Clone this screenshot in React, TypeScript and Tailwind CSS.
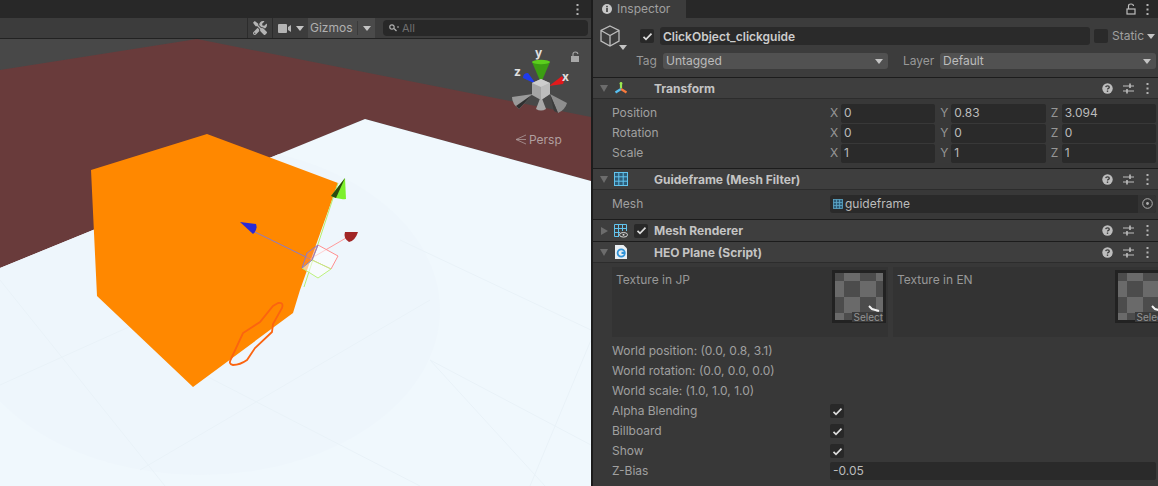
import type { ReactNode } from "react";
import { FaTools } from "react-icons/fa";

const CheckIcon = () => (
  <svg width="11" height="9" viewBox="0 0 11 9" fill="none">
    <path d="M1.5 4.8 L4 7.3 L9.5 1.6" stroke="#dcdcdc" strokeWidth="1.7" />
  </svg>
);

const Checkbox = () => (
  <div className="flex h-[14px] w-[14px] items-center justify-center rounded-[2px] bg-[#282828]">
    <CheckIcon />
  </div>
);

const Caret = ({ color = "#c4c4c4" }: { color?: string }) => (
  <svg width="8" height="5" viewBox="0 0 8 5">
    <path d="M0 0 H8 L4 5 Z" fill={color} />
  </svg>
);

const Dots = () => (
  <svg width="3" height="11" viewBox="0 0 3 11" fill="#b4b4b4">
    <rect x="0.5" y="0" width="2" height="2" />
    <rect x="0.5" y="4.5" width="2" height="2" />
    <rect x="0.5" y="9" width="2" height="2" />
  </svg>
);

const HelpIcon = () => (
  <svg width="11" height="11" viewBox="0 0 11 11">
    <circle cx="5.5" cy="5.5" r="5.2" fill="#bdbdbd" />
    <path d="M3.7 4.2 C3.9 2.5 7.3 2.5 7.3 4.3 C7.3 5.5 5.5 5.3 5.5 6.6" stroke="#3c3c3c" strokeWidth="1.3" fill="none" />
    <rect x="4.8" y="7.5" width="1.4" height="1.4" fill="#3c3c3c" />
  </svg>
);

const SlidersIcon = () => (
  <svg width="11" height="11" viewBox="0 0 11 11" stroke="#bdbdbd" strokeWidth="1.1" fill="none">
    <path d="M0 3 H11 M0 8 H11" />
    <path d="M7 0.5 V5 M4 6 V10.5" strokeWidth="1.6" />
  </svg>
);

const MeshIcon = () => (
  <svg width="14" height="14" viewBox="0 0 14 14" fill="#2d5c78" stroke="#62c4ee" strokeWidth="1">
    <rect x="0.5" y="0.5" width="13" height="13" />
    <path d="M4.8 0.5 V13.5 M9.2 0.5 V13.5 M0.5 4.8 H13.5 M0.5 9.2 H13.5" />
  </svg>
);

const MeshRendererIcon = () => (
  <svg width="14" height="14" viewBox="0 0 14 14" fill="none" stroke="#62c4ee" strokeWidth="1">
    <path d="M5 12.5 H0.5 V0.5 H12.5 V7 M4.5 0.5 V12 M8.5 0.5 V7 M0.5 4.5 H12.5 M0.5 8.5 H6" />
    <ellipse cx="9.5" cy="10.8" rx="4" ry="2.3" stroke="#d8d8d8" fill="#3c3c3c" />
    <circle cx="9.5" cy="10.8" r="1" fill="#d8d8d8" stroke="none" />
  </svg>
);

const ScriptIcon = () => (
  <svg width="12" height="14" viewBox="0 0 12 14">
    <path d="M0 0 H8.5 L12 3.5 V14 H0 Z" fill="#e8edf1" />
    <circle cx="6.2" cy="8" r="3.6" fill="none" stroke="#2f93d8" strokeWidth="1.8" />
    <rect x="6.5" y="6.8" width="3.5" height="2.2" fill="#2f93d8" />
  </svg>
);

const TransformIcon = () => (
  <svg width="14" height="13" viewBox="0 0 14 13" fill="none" strokeWidth="2.2">
    <path d="M7 6.5 V1" stroke="#9be851" />
    <path d="M7 7 L1.5 10.5" stroke="#58c0f2" />
    <path d="M7 7 L12.5 10.5" stroke="#f97a3c" />
    <circle cx="7" cy="1.5" r="1.4" fill="#9be851" stroke="none" />
  </svg>
);

const SectionHeader = ({
  title,
  icon,
  open = true,
  check = false,
  tall = false,
}: {
  title: string;
  icon: ReactNode;
  open?: boolean;
  check?: boolean;
  tall?: boolean;
}) => (
  <div className={`flex items-center border-t border-[#1c1c1c] bg-[#3e3e3e] ${tall ? "h-[22px]" : "h-[21px]"}`}>
    <div className="flex w-[15px] justify-end">
      {open ? (
        <svg width="8" height="7" viewBox="0 0 8 7">
          <path d="M0 0 H8 L4 7 Z" fill="#6c6c6c" />
        </svg>
      ) : (
        <svg width="7" height="8" viewBox="0 0 7 8">
          <path d="M0 0 V8 L7 4 Z" fill="#6c6c6c" />
        </svg>
      )}
    </div>
    <div className="flex w-[26px] justify-center">{icon}</div>
    <div className="flex w-[20px] justify-start">{check && <Checkbox />}</div>
    <span className={`flex-1 text-[12px] font-bold text-[#c4c4c4] ${tall ? "" : "pt-[2px]"}`}>{title}</span>
    <div className="flex items-center gap-[10px] pr-[9px]">
      <HelpIcon />
      <SlidersIcon />
      <div className="ml-[2px]">
        <Dots />
      </div>
    </div>
  </div>
);

const AxisField = ({ axis, value }: { axis: string; value: string }) => (
  <div className="flex items-center">
    <span className="w-[11px] shrink-0 text-[12px] text-[#969696]">{axis}</span>
    <div className="flex h-[19px] flex-1 items-center rounded-[2px] bg-[#2a2a2a] pl-[3px] text-[12px] text-[#bcbcbc]">
      {value}
    </div>
  </div>
);

const VectorRow = ({ label, x, y, z }: { label: string; x: string; y: string; z: string }) => (
  <div className="flex h-[20px] items-center pl-[19px] pr-[2px]">
    <span className="w-[218px] shrink-0 text-[12px] text-[#a0a0a0]">{label}</span>
    <div className="grid flex-1 grid-cols-3 gap-[5px]">
      <AxisField axis="X" value={x} />
      <AxisField axis="Y" value={y} />
      <AxisField axis="Z" value={z} />
    </div>
  </div>
);

const checker = [
  [0, 1, 0, 1],
  [1, 0, 1, 0],
  [0, 1, 0, 1],
  [1, 0, 1, 0],
];

const Thumb = () => (
  <div className="relative h-[53px] w-[54px] shrink-0 bg-[#222222] p-[3px]">
    <svg width="48" height="47" viewBox="0 0 48 47" className="block">
      <rect width="48" height="47" fill="#4c4c4c" />
      {checker.map((row, r) =>
        row.map((on, c) =>
          on ? <rect key={`${r}-${c}`} x={c * 16 - 7} y={r * 16 - 8} width="16" height="16" fill="#6a6a6a" /> : null,
        ),
      )}
      <path d="M34 33 L37 36 L44 38" stroke="#f2f2f2" strokeWidth="2" fill="none" />
    </svg>
    <span className="absolute bottom-[1px] right-[3px] bg-[#3a3a3a] pl-[2px] text-[10px] leading-[10px] text-[#949494]">
      Select
    </span>
  </div>
);

const TextureCell = ({ label, className }: { label: string; className: string }) => (
  <div className={`flex h-[70px] w-[276px] shrink-0 justify-between bg-[#333333] pt-[3px] pl-[4px] ${className}`}>
    <span className="pt-[3px] text-[12px] leading-[14px] text-[#989898]">{label}</span>
    <Thumb />
  </div>
);

const TextRow = ({ children }: { children: ReactNode }) => (
  <div className="flex h-[20px] items-center pl-[19px] text-[12px] text-[#a0a0a0]">{children}</div>
);

const CheckRow = ({ label }: { label: string }) => (
  <div className="flex h-[20px] items-center pl-[19px] text-[12px] text-[#a0a0a0]">
    <span className="w-[218px]">{label}</span>
    <Checkbox />
  </div>
);

const SceneToolbar = () => (
  <div className="flex h-[21px] items-center justify-end border-b border-[#222222] bg-[#3c3c3c] pr-[3px]">
    <div className="flex h-full w-[26px] items-center justify-center border-x border-[#2c2c2c] text-[#b4b4b4]">
      <FaTools size={14} />
    </div>
    <div className="flex h-full w-[35px] items-center justify-center gap-[5px]">
      <svg width="13" height="9" viewBox="0 0 13 9" fill="#b4b4b4">
        <rect width="9" height="9" rx="1" />
        <path d="M10 3 L13 1 V8 L10 6 Z" />
      </svg>
      <Caret />
    </div>
    <div className="flex h-full w-[67px] items-center bg-[#4a4a4a] text-[12px] text-[#b0b0b0]">
      <span className="w-[50px] border-r border-[#3a3a3a] pl-[2px] leading-[14px]">Gizmos</span>
      <div className="flex flex-1 justify-center">
        <Caret />
      </div>
    </div>
    <div className="ml-[8px] flex h-[16px] w-[205px] items-center gap-[3px] rounded-[4px] bg-[#282828] pl-[6px] text-[11px] text-[#707070]">
      <svg width="10" height="8" viewBox="0 0 10 8" fill="none" stroke="#b0b0b0" strokeWidth="1.2">
        <circle cx="3" cy="3" r="2.2" />
        <path d="M5 4.5 L7.5 7" />
        <path d="M8 3 H10" />
      </svg>
      All
    </div>
  </div>
);

const NavGizmo = () => (
  <g>
    {/* grey cones */}
    <path d="M533 94 L512 97 Q512 104 519 109 Z" fill="#9a9a9a" />
    <path d="M533 94 L519 109 L516 106 Z" fill="#2f2f2f" />
    <path d="M550 94 L567 103 Q565 110 558 113 Z" fill="#8e8e8e" />
    <path d="M550 94 L558 113 L554 111 Z" fill="#3c3c3c" />
    <path d="M541 96 L536 109 Q541 112 546 109 Z" fill="#a8a8a8" />
    {/* coloured cones */}
    <path d="M532 62 Q541 59 550 62 L541 83 Z" fill="#3c9e12" />
    <ellipse cx="541" cy="62" rx="9" ry="2.2" fill="#5ccf1d" />
    <path d="M523 78 Q523 73 528 73 L536 84 Z" fill="#1f3bee" />
    <path d="M562 76 Q565 80 563 84 L549 86 Z" fill="#e3191b" />
    {/* cube */}
    <path d="M532 83 L541 79 L550 83 L550 94 L541 100 L532 95 Z" fill="#a4a4a4" />
    <path d="M541 87 L550 83 L550 94 L541 100 Z" fill="#bcbcbc" />
    <path d="M532 83 L541 79 L550 83 L541 87 Z" fill="#cdcdcd" />
    <text x="535" y="57" fontSize="12" fontWeight="700" fill="#e0e0e0" fontFamily="Inter, sans-serif">y</text>
    <text x="514" y="76" fontSize="12" fontWeight="700" fill="#e0e0e0" fontFamily="Inter, sans-serif">z</text>
    <text x="562" y="81" fontSize="12" fontWeight="700" fill="#e0e0e0" fontFamily="Inter, sans-serif">x</text>
    {/* lock */}
    <rect x="571" y="56" width="8" height="6" fill="#a8a8a8" />
    <path d="M573 56 V54 Q573 52 575.5 52 Q577.5 52 578 54" fill="none" stroke="#a8a8a8" strokeWidth="1.1" />
    {/* persp */}
    <path d="M526 135 L516 139.5 L526 144 M516 139.5 H526" stroke="#ad9b9b" strokeWidth="0.8" fill="none" />
    <text x="529" y="144" fontSize="12" fill="#b09f9f" fontFamily="Inter, sans-serif">Persp</text>
  </g>
);

const SceneView = () => (
  <svg viewBox="0 39 591 447" width="591" height="447" className="block">
    <defs>
      <clipPath id="plane">
        <path d="M365 119 L591 181 V486 H0 V268 Z" />
      </clipPath>
    </defs>
    <rect x="0" y="39" width="591" height="447" fill="#484848" />
    <path d="M0 70 L197 39 L591 117 V181 L365 119 L0 270 Z" fill="#693b3b" />
    <path d="M365 119 L591 181 V486 H0 V268 Z" fill="#f0f8fd" />
    <g clipPath="url(#plane)">
      <ellipse cx="200" cy="310" rx="240" ry="165" fill="#eef6fc" />
      <path
        d="M0 280 L165 486 M0 385 L300 250 M175 360 L420 486 M591 330 L400 240 M591 445 L430 360 L545 486 M591 340 L530 486 M140 470 L430 300"
        stroke="#e9f2f8"
        strokeWidth="1"
        fill="none"
      />
    </g>
    <path d="M91 170 L207 134 L338 183 L300 290 L293 313 L193 387 L97 296 Z" fill="#ff8800" />
    <path d="M338 183 L304 287" stroke="#b5ef6e" strokeWidth="1" />
    <path
      d="M278 303 Q284 302 282 308 L273 324 L272 332 L255 348 L247 360 Q240 365 233 365 Q228 364 231 359 L243 333 L260 322 L273 306 Z"
      fill="none"
      stroke="#fb6410"
      strokeWidth="1.8"
    />
    {/* move handles */}
    <path d="M255 232 L310 259" stroke="#8a7ac8" strokeWidth="1" />
    <path d="M310 259 L346 238" stroke="#ff9a9a" strokeWidth="1" />
    <path d="M318 245 L338 256 L331 269 L312 260 Z" fill="#ffffff" fillOpacity="0.55" stroke="#ff9090" strokeWidth="1" />
    <path d="M302 268 L312 260 L331 269 L318 278 Z" fill="#ffffff" fillOpacity="0.55" stroke="#bdf27c" strokeWidth="1" />
    <path d="M307 253 L318 245 L312 260 L302 268 Z" fill="#ff8a40" fillOpacity="0.5" stroke="#8a7ac8" strokeWidth="1" />
    <path d="M240 222 L256 224 Q258 230 253 234 Z" fill="#2a2ad6" />
    <path d="M358 232 L345 232 Q343 238 349 242 Q355 241 358 232 Z" fill="#a12626" />
    <path d="M345 178 L331 196 Q338 200 346 199 Z" fill="#7cf02c" />
    <path d="M345 178 L331 196 L336 198 Z" fill="#2b4a10" />
    <NavGizmo />
  </svg>
);

export default function App() {
  return (
    <div
      className="flex h-[486px] w-[1158px] overflow-hidden bg-[#282828]"
      style={{ fontFamily: "Inter, 'Noto Sans', sans-serif" }}
    >
      {/* Scene */}
      <div className="flex w-[591px] shrink-0 flex-col">
        <div className="flex h-[18px] items-center justify-end bg-[#282828] pr-[12px]">
          <Dots />
        </div>
        <SceneToolbar />
        <SceneView />
      </div>
      <div className="w-[2px] shrink-0 bg-[#1c1c1c]" />

      {/* Inspector */}
      <div className="flex min-w-0 flex-1 flex-col bg-[#383838]">
        <div className="flex h-[18px] items-center bg-[#282828]">
          <div className="flex h-full w-[93px] items-center gap-[5px] bg-[#3c3c3c] pl-[9px] text-[12px] text-[#a0a0a0]">
            <svg width="10" height="10" viewBox="0 0 10 10">
              <circle cx="5" cy="5" r="5" fill="#c8c8c8" />
              <rect x="4.2" y="4" width="1.6" height="4" fill="#3c3c3c" />
              <rect x="4.2" y="1.8" width="1.6" height="1.5" fill="#3c3c3c" />
            </svg>
            Inspector
          </div>
          <div className="ml-auto flex items-center gap-[10px] pr-[9px]">
            <svg width="10" height="12" viewBox="0 0 10 12" fill="none" stroke="#bdbdbd" strokeWidth="1.2">
              <rect x="1" y="6" width="8" height="5" />
              <path d="M2.5 6 V3 Q2.5 1 5 1 Q7.5 1 7.5 3" />
            </svg>
            <Dots />
          </div>
        </div>

        <div className="flex h-[59px] flex-col bg-[#3c3c3c]">
          <div className="flex h-[34px] items-center pt-[2px]">
            <div className="relative ml-[7px] flex w-[40px]">
              <svg width="20" height="22" viewBox="0 0 20 22" fill="none" stroke="#bdbdbd" strokeWidth="1.3">
                <path d="M10 1 L19 5.5 V16 L10 21 L1 16 V5.5 Z M1 5.5 L10 10.5 L19 5.5 M10 10.5 V21" />
              </svg>
              <div className="absolute left-[19px] top-[20px]">
                <Caret />
              </div>
            </div>
            <Checkbox />
            <div className="ml-[6px] flex h-[18px] w-[430px] items-center rounded-[3px] bg-[#2a2a2a] pl-[3px] pt-[1px] text-[12px] font-semibold text-[#cccccc]">
              ClickObject_clickguide
            </div>
            <div className="ml-[4px] h-[14px] w-[14px] rounded-[2px] bg-[#2a2a2a]" />
            <span className="ml-[4px] text-[12px] text-[#a0a0a0]">Static</span>
            <div className="ml-[3px]">
              <Caret />
            </div>
          </div>
          <div className="flex items-center">
            <span className="ml-[43px] w-[27px] text-[12px] text-[#989898]">Tag</span>
            <div className="flex h-[16px] w-[225px] items-center justify-between rounded-[3px] bg-[#515151] pl-[3px] pr-[5px] text-[12px] text-[#bcbcbc]">
              Untagged
              <Caret />
            </div>
            <span className="ml-[15px] w-[37px] text-[12px] text-[#989898]">Layer</span>
            <div className="flex h-[16px] w-[216px] items-center justify-between rounded-[3px] bg-[#515151] pl-[3px] pr-[5px] text-[12px] text-[#bcbcbc]">
              Default
              <Caret />
            </div>
          </div>
        </div>

        <SectionHeader title="Transform" icon={<TransformIcon />} />
        <div className="border-t border-[#2c2c2c] pt-[4px] pb-[5px]">
          <VectorRow label="Position" x="0" y="0.83" z="3.094" />
          <VectorRow label="Rotation" x="0" y="0" z="0" />
          <VectorRow label="Scale" x="1" y="1" z="1" />
        </div>

        <SectionHeader title="Guideframe (Mesh Filter)" icon={<MeshIcon />} />
        <div className="flex h-[30px] items-center border-t border-[#2c2c2c] pb-[2px] pl-[19px] pr-[2px]">
          <span className="w-[218px] text-[12px] text-[#a0a0a0]">Mesh</span>
          <div className="flex h-[18px] flex-1 items-center rounded-[3px] bg-[#2a2a2a] pl-[3px] text-[12px] text-[#bcbcbc]">
            <svg width="10" height="10" viewBox="0 0 10 10" fill="#2d5c78" stroke="#5da7c8" strokeWidth="0.8">
              <rect x="0.5" y="0.5" width="9" height="9" />
              <path d="M3.5 0.5 V9.5 M6.5 0.5 V9.5 M0.5 3.5 H9.5 M0.5 6.5 H9.5" />
            </svg>
            <span className="ml-[2px] flex-1">guideframe</span>
            <div className="flex h-full w-[18px] items-center justify-center rounded-r-[3px] bg-[#333333]">
              <svg width="11" height="11" viewBox="0 0 11 11" fill="none" stroke="#b0b0b0">
                <circle cx="5.5" cy="5.5" r="4.8" />
                <circle cx="5.5" cy="5.5" r="1.4" fill="#b0b0b0" stroke="none" />
              </svg>
            </div>
          </div>
        </div>

        <SectionHeader title="Mesh Renderer" icon={<MeshRendererIcon />} open={false} check tall />
        <SectionHeader title="HEO Plane (Script)" icon={<ScriptIcon />} />

        <div className="flex h-[79px] gap-[5px] border-t border-[#2c2c2c] pt-[4px] pl-[19px]">
          <TextureCell label="Texture in JP" className="pr-[2px]" />
          <TextureCell label="Texture in EN" className="" />
        </div>

        <TextRow>World position: (0.0, 0.8, 3.1)</TextRow>
        <TextRow>World rotation: (0.0, 0.0, 0.0)</TextRow>
        <TextRow>World scale: (1.0, 1.0, 1.0)</TextRow>
        <CheckRow label="Alpha Blending" />
        <CheckRow label="Billboard" />
        <CheckRow label="Show" />
        <div className="flex h-[20px] items-center pl-[19px] pr-[2px] text-[12px] text-[#a0a0a0]">
          <span className="w-[218px]">Z-Bias</span>
          <div className="flex h-[18px] flex-1 items-center rounded-[2px] bg-[#2a2a2a] pl-[3px] text-[#bcbcbc]">-0.05</div>
        </div>
      </div>
    </div>
  );
}
